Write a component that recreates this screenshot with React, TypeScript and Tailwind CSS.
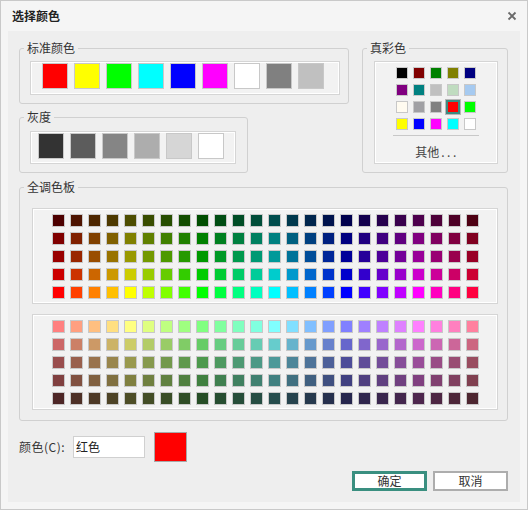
import React from 'react';

const font = "font-['Noto_Sans_CJK_SC','Noto_Sans',sans-serif]";

const STANDARD = ['#ff0000', '#ffff00', '#00ff00', '#00ffff', '#0000ff', '#ff00ff', '#ffffff', '#808080', '#c0c0c0'];
const GRAYS = ['#333333', '#5c5c5c', '#858585', '#adadad', '#d6d6d6', '#ffffff'];
const TRUE_COLORS = [
  '#000000', '#800000', '#008000', '#808000', '#000080',
  '#800080', '#008080', '#c0c0c0', '#c0dcc0', '#a6caf0',
  '#fffbf0', '#a0a0a4', '#808080', '#ff0000', '#00ff00',
  '#ffff00', '#0000ff', '#ff00ff', '#00ffff', '#ffffff',
];
const SELECTED = 13;

// hsv -> rgb string, h in degrees
function hsv(h: number, s: number, v: number) {
  const f = (n: number) => {
    const k = (n + h / 60) % 6;
    return v - v * s * Math.max(0, Math.min(k, 4 - k, 1));
  };
  const to = (x: number) => Math.round(x * 255);
  return `rgb(${to(f(5))},${to(f(3))},${to(f(1))})`;
}

const HUES = Array.from({ length: 24 }, (_, i) => i * 15);
const BRIGHT = [0.3, 0.5, 0.6, 0.8, 1].map((v) => HUES.map((h) => hsv(h, 1, v)));
const SOFT = [1, 0.8, 0.6, 0.5, 0.3].map((v) => HUES.map((h) => hsv(h, 0.5, v)));

const boxClass = 'border border-[#d5d5d5] bg-[#f2f2f2] shadow-[inset_0_0_0_1px_#ffffff]';

function Group({ title, className, children }: { title: string; className: string; children: React.ReactNode }) {
  return (
    <fieldset className={`border border-[#d0d0d0] rounded-[3px] min-w-0 ${className}`}>
      <legend className="ml-[4px] px-[3px] text-[12px] leading-[16px] text-[#333]">{title}</legend>
      {children}
    </fieldset>
  );
}

function PaletteBox({ rows, className }: { rows: string[][]; className: string }) {
  return (
    <div className={`${boxClass} ml-[12px] w-[466px] h-[96px] flex items-center justify-center ${className}`}>
      <div className="grid grid-cols-[repeat(24,13px)] gap-[5px]">
        {rows.flat().map((c, i) => (
          <div key={i} className="w-[13px] h-[13px] border border-[#c8c8c8]" style={{ background: c }} />
        ))}
      </div>
    </div>
  );
}

export default function App() {
  return (
    <div className={`w-[528px] h-[510px] border border-[#c9c9c9] bg-[#f5f5f5] flex flex-col ${font}`}>
      {/* Title bar */}
      <div className="h-[30px] shrink-0 flex items-center justify-between pl-[11px] pr-[10px]">
        <span className="text-[12px] font-bold text-[#222]">选择颜色</span>
        <svg width="10" height="10" viewBox="0 0 10 10" className="text-[#6a6a6a]">
          <path d="M1.5 1.5 L8.5 8.5 M8.5 1.5 L1.5 8.5" stroke="currentColor" strokeWidth="1.8" />
        </svg>
      </div>

      {/* Body */}
      <div className="mx-[7px] h-[471px] bg-[#eeeeee] pt-[9px] pl-[11px] pr-[12px] flex flex-col">
        <div className="flex gap-[13px]">
          <div className="flex flex-col gap-[5px] w-[330px]">
            <Group title="标准颜色" className="w-[330px] h-[64px]">
              <div className={`${boxClass} mt-[5px] ml-[10px] w-[310px] h-[34px] pt-[1px] pl-[11px] flex gap-[6px]`}>
                {STANDARD.map((c, i) => (
                  <div key={i} className="w-[26px] h-[26px] border border-[#c8c8c8]" style={{ background: c }} />
                ))}
              </div>
            </Group>
            <Group title="灰度" className="w-[229px] h-[64px]">
              <div className={`${boxClass} mt-[6px] ml-[10px] w-[206px] h-[33px] pt-[1px] pl-[7px] flex gap-[6px]`}>
                {GRAYS.map((c, i) => (
                  <div key={i} className="w-[26px] h-[26px] border border-[#c8c8c8]" style={{ background: c }} />
                ))}
              </div>
            </Group>
          </div>

          <Group title="真彩色" className="w-[146px] h-[133px]">
            <div className={`${boxClass} mt-[5px] ml-[11px] w-[124px] h-[103px] pt-[5px] flex flex-col items-center`}>
              <div className="grid grid-cols-[repeat(5,12px)] gap-[5px]">
                {TRUE_COLORS.map((c, i) => (
                  <div
                    key={i}
                    className={
                      i === SELECTED
                        ? 'w-[12px] h-[12px] border border-[#3b8b80] shadow-[0_0_0_1px_#3b8b80,0_0_0_2px_#b8b8b8]'
                        : 'w-[12px] h-[12px] border border-[#c8c8c8]'
                    }
                    style={{ background: c }}
                  />
                ))}
              </div>
              <div className="mt-[5px] w-[86px] h-px bg-[#c8c8c8]" />
              <div className="mt-[8px] pl-[2px] text-[12px] leading-[16px] text-[#444]">
                其他<span className="ml-[2px] tracking-[2.5px]">...</span>
              </div>
            </div>
          </Group>
        </div>

        <Group title="全调色板" className="mt-[6px] w-[489px] h-[242px]">
          <PaletteBox rows={BRIGHT} className="mt-[13px]" />
          <PaletteBox rows={SOFT} className="mt-[10px]" />
        </Group>

        <div className="mt-[11px] h-[30px] flex items-center">
          <span className="w-[54px] text-[12px] text-[#333] tracking-[0.5px]">颜色(C):</span>
          <div className="w-[72px] h-[22px] border border-[#d0d0d0] bg-white flex items-center pl-[2px] text-[12px] text-[#222]">
            红色
          </div>
          <div className="ml-[9px] w-[33px] h-[30px] border border-[#a8a8a8] bg-[#ff0000]" />
        </div>

        <div className="mt-[9px] flex justify-end gap-[6px]">
          <button className="w-[75px] h-[20px] border-[3px] border-[#3a8f80] bg-white text-[12px] text-[#333] flex items-center justify-center">
            确定
          </button>
          <button className="w-[75px] h-[20px] border-2 border-[#adadad] bg-white text-[12px] text-[#333] flex items-center justify-center">
            取消
          </button>
        </div>
      </div>
    </div>
  );
}
